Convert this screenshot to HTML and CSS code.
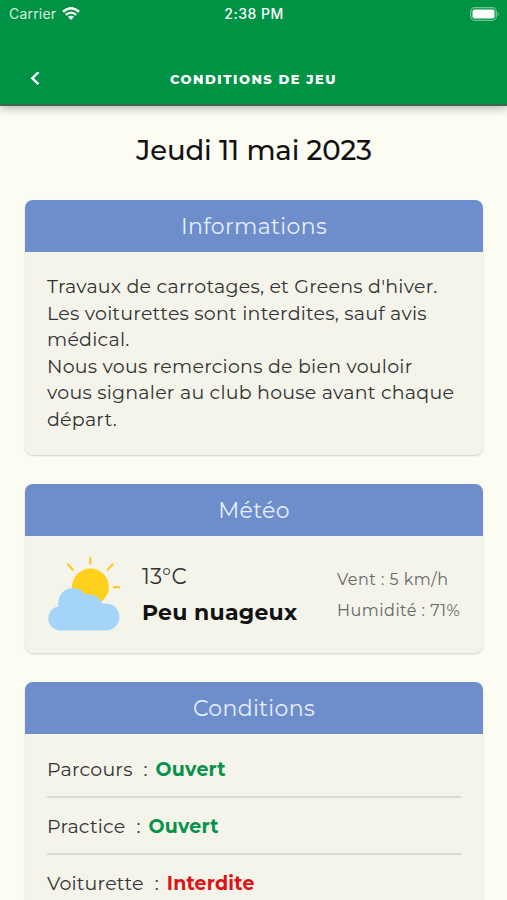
FILE: index.html
```
<!DOCTYPE html>
<html lang="fr">
<head>
    <meta charset="UTF-8">
    <meta name="viewport" content="width=device-width, initial-scale=1.0">
    <title>Conditions de jeu</title>
    <link rel="stylesheet" href="styles.css">
</head>
<body>
    <header class="header">
        <div class="status">
            <div class="carrier">
                <span>Carrier</span>
                <svg class="wifi" viewBox="0 0 18 14" width="18" height="14">
                    <path d="M1 4.7Q9-2.2 17 4.7" fill="none" stroke="#fff" stroke-width="2.5"/>
                    <path d="M3.8 7.8Q9 3.3 14.2 7.8" fill="none" stroke="#fff" stroke-width="2.2"/>
                    <path d="M6 9.8Q9 7.6 12 9.8L9 13Z" fill="#fff"/>
                </svg>
            </div>
            <span class="time">2:38 PM</span>
            <svg class="battery" viewBox="0 0 30 14" width="30" height="14">
                <rect x="0.7" y="0.7" width="25.6" height="12.6" rx="4" fill="none" stroke="#73c594" stroke-width="1.3"/>
                <rect x="2.5" y="2.5" width="22" height="9" rx="2" fill="#fff"/>
                <path d="M27.7 4.7Q30 7 27.7 9.3Z" fill="#73c594"/>
            </svg>
        </div>
        <div class="navbar">
            <svg class="back" viewBox="0 0 10 14" width="10" height="14">
                <path d="M8.5 0.2L2.3 6.2L8.5 12.2" fill="none" stroke="#fff" stroke-width="2.4"/>
            </svg>
            <h1>CONDITIONS DE JEU</h1>
        </div>
    </header>

    <main>
        <h2 class="date">Jeudi 11 mai 2023</h2>

        <section class="card">
            <h3>Informations</h3>
            <p class="infos">
                Travaux de carrotages, et Greens d'hiver.<br>
                Les voiturettes sont interdites, sauf avis médical.<br>
                Nous vous remercions de bien vouloir vous signaler au club house avant chaque départ.
            </p>
        </section>

        <section class="card">
            <h3>Météo</h3>
            <div class="meteo">
                <svg class="weather" viewBox="0 0 74 76" width="74" height="76">
                    <path d="M43.3 2.2V7.7M20.8 8.3L25.8 13.8M65.8 8.3L60.8 13.6M67 31.2H72.3" stroke="#fccb27" stroke-width="2.2" stroke-linecap="round"/>
                    <circle cx="43.4" cy="31" r="18.5" fill="#ffd01c"/>
                    <path d="M11.5 50.3A15 15 0 0 1 38.7 38.8A14 14 0 0 1 55.3 47.6H59A13.4 13.4 0 0 1 59 74.5H12.3A12.2 12.2 0 0 1 11.5 50.3Z" fill="#a4d5f8"/>
                </svg>
                <div class="temp">
                    <p class="degrees">13°C</p>
                    <p class="sky">Peu nuageux</p>
                </div>
                <div class="details">
                    <p>Vent : 5 km/h</p>
                    <p>Humidité : 71%</p>
                </div>
            </div>
        </section>

        <section class="card">
            <h3>Conditions</h3>
            <ul class="conditions">
                <li><span>Parcours</span><span class="colon">:</span><b class="open">Ouvert</b></li>
                <li><span>Practice</span><span class="colon">:</span><b class="open">Ouvert</b></li>
                <li><span>Voiturette</span><span class="colon">:</span><b class="closed">Interdite</b></li>
            </ul>
        </section>
    </main>
</body>
</html>
```
FILE: styles.css
```
* {
    box-sizing: border-box;
    margin: 0;
    padding: 0;
}

body {
    height: 900px;
    overflow: hidden;
    background: #fcfcf3;
    color: #333;
    font-family: 'Montserrat', 'Inter', sans-serif;
}

/* En-tête */
.header {
    height: 106px;
    background: #009345;
    color: #fff;
    border-bottom: 2px solid #41664b;
    box-shadow: 0 3px 8px rgba(0, 0, 0, 0.25);
}

.status {
    display: grid;
    grid-template-columns: 1fr auto 1fr;
    align-items: center;
    height: 27px;
    padding: 0 7px 0 9px;
    font-family: 'Inter', sans-serif;
    font-size: 14px;
}

.carrier {
    display: flex;
    align-items: center;
    gap: 6px;
    color: #d3f0dd;
    letter-spacing: 0.2px;
}

.time {
    margin-right: 1px;
    font-weight: 500;
    letter-spacing: 0.5px;
}

.battery {
    justify-self: end;
}

.navbar {
    display: grid;
    grid-template-columns: 30px 1fr 30px;
    align-items: center;
    height: 26px;
    margin-top: 39px;
    padding: 0 30px;
}

.navbar h1 {
    font-size: 13px;
    font-weight: 800;
    letter-spacing: 1.5px;
    text-align: center;
}

/* Contenu */
main {
    padding: 0 24px 0 25px;
}

.date {
    padding: 25px 0 31.4px;
    color: #111;
    font-size: 27.5px;
    font-weight: 500;
    line-height: 38px;
    letter-spacing: -0.1px;
    text-align: center;
}

.card {
    margin-bottom: 29px;
    border-radius: 8px;
    background: #f4f4eb;
    box-shadow: 0 1px 2px rgba(0, 0, 0, 0.17);
    overflow: hidden;
}

.card h3 {
    height: 52px;
    background: #6d8dcb;
    color: #e6eefc;
    font-size: 22px;
    font-weight: 400;
    line-height: 53px;
    letter-spacing: 0.35px;
    text-align: center;
}

.infos {
    padding: 22px 22px 21.2px;
    font-size: 19px;
    line-height: 26.5px;
    letter-spacing: 0.24px;
}

/* Météo */
.meteo {
    display: flex;
    height: 117px;
    padding: 20.5px 22px 0;
}

.temp {
    margin-left: 21px;
    width: 195px;
}

.degrees {
    font-size: 21.5px;
    line-height: 41px;
    letter-spacing: 0.2px;
}

.sky {
    color: #111;
    font-size: 22px;
    font-weight: 700;
    line-height: 31px;
    letter-spacing: 0.25px;
}

.details {
    padding-top: 9px;
    color: #666;
    font-size: 16px;
    line-height: 30.5px;
    letter-spacing: 0.5px;
    white-space: nowrap;
}

/* Conditions */
.conditions {
    padding: 7px 22px 0;
    list-style: none;
}

.conditions li {
    display: flex;
    height: 57.3px;
    border-bottom: 2px solid #d9dad5;
    font-size: 19px;
    line-height: 57px;
    letter-spacing: 0.2px;
}

.colon {
    width: 23px;
    padding-left: 11px;
}

.open {
    color: #07914c;
}

.closed {
    color: #dc1216;
}
```
